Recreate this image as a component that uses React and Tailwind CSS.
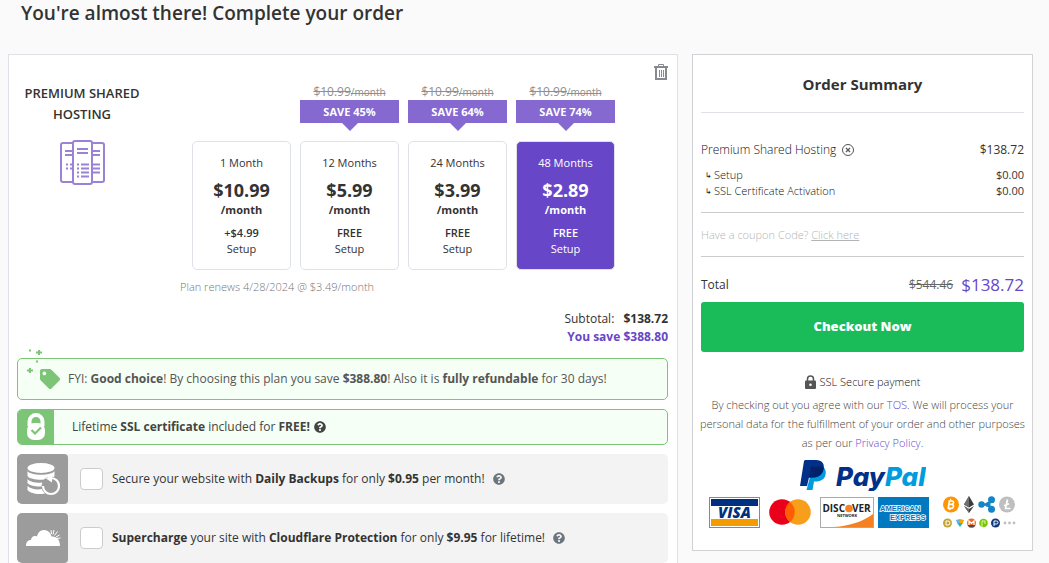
import React, { useState } from 'react';
import { FaTag, FaQuestionCircle } from 'react-icons/fa';

const PLANS = [
  { key: 1, label: '1 Month', price: '$10.99', setup: '+$4.99' },
  { key: 12, label: '12 Months', price: '$5.99', setup: 'FREE', save: 'SAVE 45%' },
  { key: 24, label: '24 Months', price: '$3.99', setup: 'FREE', save: 'SAVE 64%' },
  { key: 48, label: '48 Months', price: '$2.89', setup: 'FREE', save: 'SAVE 74%' },
];

const FEES = [
  { label: 'Setup', amount: '$0.00' },
  { label: 'SSL Certificate Activation', amount: '$0.00' },
];

const ServersIcon = () => (
  <svg width="45" height="45" viewBox="0 0 45 45" fill="none" stroke="#9a82d6" strokeWidth="2">
    <path d="M12.500 3H3a2 2 0 0 0-2 2v35a2 2 0 0 0 2 2h9.500M32.500 3H42a2 2 0 0 1 2 2v35a2 2 0 0 1-2 2h-9.500" />
    <rect x="13" y="1" width="19" height="43" rx="2" />
    <path d="M5 11h7M5 15h7M33 11h7M33 15h7M33 24.500h7M33 28.500h7M33 32.500h7" />
    <path d="M17 9h11M17 13h11M21 24.500h8M21 28.500h8M21 32.500h8M21 36.500h8" />
    <path d="M17 24.500h2M17 28.500h2M17 32.500h2M17 36.500h2M6 24.500h2M10 24.500h2M6 28.500h2M10 28.500h2" />
  </svg>
);

const TrashIcon = () => (
  <svg width="14" height="16" viewBox="0 0 14 16" fill="none" stroke="#868a90">
    <path d="M0 3h14" strokeWidth="2" />
    <path d="M4.500 2.500v-2h5v2" />
    <path d="M2 4v11h10V4" strokeWidth="2" />
    <path d="M5.500 6v7M7.500 6v7M9.500 6v7" />
  </svg>
);

const PadlockCheckIcon = () => (
  <svg width="20" height="28" viewBox="0 0 20 28">
    <path d="M3.500 13V8.500a6.500 6.500 0 0 1 13 0V13" fill="none" stroke="#fff" strokeWidth="4" />
    <rect x="1" y="10" width="18" height="17" rx="7" fill="#fff" />
    <path d="M5.500 17l3.500 3.500 6-6" fill="none" stroke="#7cc576" strokeWidth="2.200" />
  </svg>
);

const BackupIcon = () => (
  <svg width="34" height="34" viewBox="0 0 34 34">
    <g fill="#fff">
      <ellipse cx="15" cy="6" rx="13.500" ry="5" />
      <path d="M1.500 9c3 5 24 5 27 0v5c-3 5-24 5-27 0z" />
      <path d="M1.500 17c3 4 13 4.500 19 3l-4 4.500C9 25 3.500 23.500 1.500 21z" />
      <path d="M1.500 24c3 3 9.500 4 14.500 3l3 4.500C11 33 3.500 31 1.500 28z" />
    </g>
    <circle cx="25" cy="24" r="9.500" fill="#9c9c9c" />
    <path d="M25 16a8 8 0 1 1-8 8" fill="none" stroke="#fff" strokeWidth="2.200" />
    <path d="M20 16.500l6-4v8z" fill="#fff" />
  </svg>
);

const CloudIcon = () => (
  <svg width="36" height="20" viewBox="0 0 36 20">
    <path
      d="M1 18c0-4 2-6 5-6 0-3 3-5 6-3.500C13 4 16 2 19 2c4 0 7 3 7.500 6.500C32 8 35 12 35 18z"
      fill="#fff"
    />
    <path
      d="M26.500 6l-.5-4M28 6.500l1-4.500M29.500 7.500l3-4M31 9l3.500-2M31.500 10.500l4-.5"
      stroke="#fff"
      strokeWidth="1"
    />
  </svg>
);

const Sparkles = () => (
  <svg width="18" height="26" viewBox="0 0 18 26" stroke="#7cc576" strokeWidth="2">
    <path d="M3 1.500h2M10 3.500h6M13 1v5M10 12.500h2M1 21.500h6M4 19v5" />
  </svg>
);

const LockIcon = () => (
  <svg width="11" height="14" viewBox="0 0 11 14">
    <path d="M2.500 6V4a3 3 0 0 1 6 0v2" fill="none" stroke="#555" strokeWidth="1.500" />
    <rect y="5.500" width="11" height="8.500" rx="1" fill="#555" />
    <circle cx="5.500" cy="9.700" r="1.300" fill="#fff" />
  </svg>
);

const PayPalLogo = () => (
  <svg width="126" height="31" viewBox="0 0 126 31" role="img" aria-label="PayPal">
    <path d="M12 9.500L23 7c3 2 3.500 6 2 9.500-1.500 3.500-5 5-9.500 5H14l-1.500 8.500H6.500z" fill="#009cde" />
    <path d="M5 0h11c6 0 9 4 7.500 9-1.500 6-5 8.500-11 8.500H9L7 26H0L4 1z" fill="#003087" />
    <path d="M11 7.500c0-.7.500-1 1-1h7.500c2 0 3.300.2 4.200.7.100 6-4.200 10.300-11.200 10.300H9z" fill="#012169" />
    <text
      x="36"
      y="26"
      fontSize="26"
      fontFamily="Inter, sans-serif"
      fontWeight="800"
      fontStyle="italic"
      fill="#003087"
      className="[font-feature-settings:'cv11']"
    >
      Pay<tspan fill="#009cde">Pal</tspan>
    </text>
  </svg>
);

const VisaLogo = () => (
  <svg width="51" height="31" viewBox="0 0 51 31" role="img" aria-label="Visa">
    <rect x="0.500" y="0.500" width="50" height="30" fill="#fff" stroke="#7b86b5" />
    <path d="M2 2h47v7H2z" fill="#00307f" />
    <path d="M2 22h47v7H2z" fill="#f49b00" />
    <text
      x="25.500"
      y="21"
      textAnchor="middle"
      fontSize="15"
      fontFamily="Open Sans, sans-serif"
      fontWeight="800"
      fontStyle="italic"
      fill="#00307f"
      stroke="#fff"
      strokeWidth="1"
      paintOrder="stroke"
    >
      VISA
    </text>
  </svg>
);

const MastercardLogo = () => (
  <svg width="42" height="26" viewBox="0 0 42 26" role="img" aria-label="Mastercard">
    <circle cx="13" cy="13" r="12.800" fill="#eb001b" />
    <circle cx="29" cy="13" r="12.800" fill="#f79e1b" />
    <path d="M21 3a12.800 12.800 0 0 1 0 20 12.800 12.800 0 0 1 0-20z" fill="#ff5f00" />
  </svg>
);

const DiscoverLogo = () => (
  <svg width="54" height="31" viewBox="0 0 54 31" role="img" aria-label="Discover">
    <rect x="0.500" y="0.500" width="53" height="30" fill="#fff" stroke="#aaa" />
    <path d="M53 17v13H14c16-1 30-6 39-13z" fill="#f58220" />
    <g fontFamily="Open Sans, sans-serif" fontWeight="700" fill="#222">
      <text x="25" y="15" textAnchor="end" fontSize="10">DISC</text>
      <text x="32" y="15" fontSize="10">VER</text>
      <text x="27" y="20" textAnchor="middle" fontSize="4">NETWORK</text>
    </g>
    <circle cx="29" cy="11.500" r="3.800" fill="#f58220" />
  </svg>
);

const AmexLogo = () => (
  <svg width="51" height="31" viewBox="0 0 51 31" role="img" aria-label="American Express">
    <rect width="51" height="31" fill="#0079c1" />
    <g
      fontFamily="Liberation Sans, sans-serif"
      fontWeight="700"
      fontSize="7.500"
      fill="#0079c1"
      stroke="#fff"
      strokeWidth="1.500"
      paintOrder="stroke"
    >
      <text x="2" y="14">AMERICAN</text>
      <text x="12" y="23">EXPRESS</text>
    </g>
  </svg>
);

const CryptoLogos = () => (
  <svg width="74" height="32" viewBox="0 0 74 32" role="img" aria-label="Cryptocurrencies">
    <circle cx="9" cy="8.500" r="8" fill="#ff9500" />
    <circle cx="65" cy="8.500" r="8" fill="#bfbfbf" />
    <g fill="none" stroke="#fff" strokeWidth="1.700">
      <path d="M7.500 4.500l-1.300 8M6.500 5h3.500c2.300 0 2 3.300-.5 3.300H7.200h2.500c2.800 0 2.200 4-.7 4H5.500" />
      <path d="M8.700 2.800l-.3 1.700M8 12.500l-.3 1.700" strokeWidth="1.200" />
      <path d="M65.500 3.500l-2 9h5M62 9.800l5-2" />
    </g>
    <path d="M27 0l5 8.500-5 3-5-3zM22 10l5 3 5-3-5 7z" fill="#3c3c3d" />
    <path d="M27 0v11.500l-5-3zM27 13v4l-5-7z" fill="#6f6f70" />
    <path d="M39.500 8.500H46l3.500-4.500M46 8.500l3.500 4.500" stroke="#1585c5" strokeWidth="2.500" fill="none" />
    <g fill="#1585c5">
      <circle cx="39.500" cy="8.500" r="3.200" />
      <circle cx="46" cy="8.500" r="2.500" />
      <circle cx="49.500" cy="3.700" r="3.500" />
      <circle cx="49.500" cy="13.300" r="3.500" />
    </g>
    <circle cx="5.500" cy="27" r="4.500" fill="#c2a633" />
    <path d="M4 25h2a2 2 0 0 1 0 4H4z" fill="none" stroke="#fff" />
    <path d="M14 24l4-1v4h-3z" fill="#67b2e8" />
    <path d="M18 23l4 1-1 3h-3z" fill="#f7a800" />
    <path d="M15 27h6l-3 4z" fill="#24bba5" />
    <circle cx="29.500" cy="27" r="4.500" fill="#f26822" />
    <path d="M27 29v-4l2.500 2.500L32 25v4" fill="none" stroke="#fff" strokeWidth="1.200" />
    <path d="M25.500 29h8l-2 2.500h-4z" fill="#4c4c4c" />
    <circle cx="41.500" cy="27" r="4.300" fill="#78c800" />
    <path d="M40 31v-6h3v3" fill="none" stroke="#dff5bc" />
    <circle cx="53.500" cy="27" r="4.500" fill="#123a7a" />
    <path d="M52 30v-5h2.500a1.500 1.500 0 0 1 0 3H52" fill="none" stroke="#fff" />
    <g fill="#bfbfbf">
      <circle cx="63" cy="27" r="1.400" />
      <circle cx="67.500" cy="27" r="1.400" />
      <circle cx="72" cy="27" r="1.400" />
    </g>
  </svg>
);

const PlanOption = ({ plan, active, onSelect }) => (
  <div className="flex flex-1 flex-col text-center">
    {plan.save && (
      <>
        <div className="h-[17px] text-xs leading-[17px] text-[#8f8f8f] line-through">
          $10.99<span className="text-[10px]">/month</span>
        </div>
        <div className="bg-[#8568d0] text-[11px] leading-[23px] font-bold text-white">{plan.save}</div>
        <div className="mx-auto mb-2.5 h-0 w-0 border-x-8 border-t-8 border-x-transparent border-t-[#8568d0]"></div>
      </>
    )}
    <button
      type="button"
      aria-pressed={active}
      onClick={onSelect}
      className={`flex flex-col items-center rounded-[5px] border border-[#dee2e6] pt-3 pb-3 text-[11px] leading-4 ${
        active ? 'bg-[#6747c7] text-white' : 'bg-white text-[#333]'
      }`}
    >
      <span className="leading-[18px]">{plan.label}</span>
      <span className="mt-1.5 text-lg leading-6 font-bold">{plan.price}</span>
      <span className="font-bold">/month</span>
      <span className="mt-[7px] font-semibold">{plan.setup}</span>
      <span>Setup</span>
    </button>
  </div>
);

const AddOn = ({ id, icon, children }) => (
  <div className="mt-[9px] flex h-[50px] items-center overflow-hidden rounded-[5px] bg-[#f3f3f3] text-xs text-[#333]">
    <div className="flex h-full w-[51px] items-center justify-center rounded bg-[#9c9c9c]">{icon}</div>
    <input
      id={id}
      type="checkbox"
      className="ml-3 h-[22px] w-[23px] appearance-none rounded border border-[#ccc] bg-white checked:bg-[#6747c7]"
    />
    <label htmlFor={id} className="ml-[9px]">{children}</label>
    <FaQuestionCircle size={12} className="ml-2 text-[#6c757d]" />
  </div>
);

const OrderSummary = () => (
  <aside className="w-[341px] shrink-0 self-start border border-[#d0d2d5] bg-white px-2 pb-[22px] text-xs text-[#333]">
    <h2 className="border-b border-[#dee2e6] pt-[17px] pb-4 text-center text-[15px] leading-6 font-bold">
      Order Summary
    </h2>
    <div className="mt-7 flex items-center justify-between leading-[18px]">
      <span className="flex items-center gap-1.5 font-light text-[#111]">
        Premium Shared Hosting
        <button type="button" aria-label="Remove Premium Shared Hosting">
          <svg width="12" height="12" viewBox="0 0 12 12" fill="none" stroke="#555">
            <circle cx="6" cy="6" r="5.500" />
            <path d="M4 4l4 4M8 4l-4 4" strokeWidth="1.200" />
          </svg>
        </button>
      </span>
      <span>$138.72</span>
    </div>
    <div className="mt-2 border-b border-[#ccc] pb-[13px] text-[11px] leading-4">
      {FEES.map((fee) => (
        <div key={fee.label} className="flex h-4 justify-between">
          <span className="flex gap-0.5 pl-1 font-light text-[#111]">
            <span className="text-[8px]">↳</span>
            {fee.label}
          </span>
          <span>{fee.amount}</span>
        </div>
      ))}
    </div>
    <div className="border-b border-[#ccc] pt-3.5 pb-[13px] text-[11px] leading-4 font-light text-[#b4b4b4]">
      Have a coupon Code? <a href="#coupon" className="underline">Click here</a>
    </div>
    <div className="flex items-center justify-between pt-[15px] pb-1">
      <span>Total</span>
      <span className="flex items-center gap-2">
        <span className="text-[#666] line-through">$544.46</span>
        <span className="text-[17px] leading-[26px] font-medium text-[#6747c7]">$138.72</span>
      </span>
    </div>
    <button type="button" className="h-[50px] w-full rounded-[3px] bg-[#1abc59] text-[13px] font-extrabold text-white">
      Checkout Now
    </button>
    <div className="mt-[21px] flex items-center justify-center gap-1 text-[11px] leading-[18px] font-light text-[#111]">
      <LockIcon />
      SSL Secure payment
    </div>
    <p className="-mx-1 mt-1 text-center text-[11px] leading-[19px] font-light text-[#444]">
      By checking out you agree with our <a href="#tos" className="text-[#6747c7]">TOS</a>. We will process your
      personal data for the fulfillment of your order and other purposes as per our{' '}
      <a href="#privacy" className="text-[#6747c7]">Privacy Policy</a>.
    </p>
    <div className="mt-2 flex justify-center">
      <PayPalLogo />
    </div>
    <div className="mt-[5px] flex items-center gap-[9px] px-2">
      <VisaLogo />
      <MastercardLogo />
      <div className="flex gap-1">
        <DiscoverLogo />
        <AmexLogo />
      </div>
      <div className="ml-auto">
        <CryptoLogos />
      </div>
    </div>
  </aside>
);

const App = () => {
  const [selected, setSelected] = useState(48);

  return (
    <div className="min-h-screen bg-[#fafafa] font-['Open_Sans','Noto_Sans',sans-serif] text-[#333]">
      <h1 className="px-[21px] pb-7 text-[19px] leading-[26px] font-semibold">You're almost there! Complete your order</h1>
      <main className="flex gap-3.5 pr-4 pl-2">
        <section className="relative min-w-0 flex-1 border border-b-0 border-[#dee2e6] bg-white pt-7 pr-[9px] pl-2">
          <button type="button" aria-label="Remove item" className="absolute top-[9px] right-[9px]">
            <TrashIcon />
          </button>

          <div className="flex">
            <div className="flex w-[130px] shrink-0 flex-col items-center">
              <h2 className="text-center text-[13px] leading-[21px] font-semibold">PREMIUM SHARED HOSTING</h2>
              <div className="mt-[15px]">
                <ServersIcon />
              </div>
            </div>
            <div className="ml-[33px] flex-1">
              <div className="flex items-end gap-[9px] pr-[53px] pl-3">
                {PLANS.map((plan) => (
                  <PlanOption
                    key={plan.key}
                    plan={plan}
                    active={plan.key === selected}
                    onSelect={() => setSelected(plan.key)}
                  />
                ))}
              </div>
              <p className="mt-[9px] text-[11px] leading-4 font-light text-[#777]">Plan renews 4/28/2024 @ $3.49/month</p>
            </div>
          </div>

          <div className="mt-[15px] mb-3 text-right text-xs leading-[18px]">
            <div>Subtotal: <strong className="ml-1.5">$138.72</strong></div>
            <div className="font-bold text-[#6747c7]">You save $388.80</div>
          </div>

          <div className="relative flex h-[42px] items-center rounded-[5px] border border-[#7cc576] bg-[#f5fff5] pl-[22px] text-xs text-[#555]">
            <div className="absolute -top-2.5 left-2">
              <Sparkles />
            </div>
            <FaTag size={20} className="mr-2 text-[#7cc576]" />
            <p>
              FYI: <strong>Good choice</strong>! By choosing this plan you save <strong>$388.80</strong>! Also it is{' '}
              <strong>fully refundable</strong> for 30 days!
            </p>
          </div>

          <div className="mt-[9px] flex h-9 items-center overflow-hidden rounded-[5px] border border-[#7cc576] bg-[#f5fff5] text-xs text-[#444]">
            <div className="flex h-full w-9 items-center justify-center bg-[#7cc576]">
              <PadlockCheckIcon />
            </div>
            <p className="ml-[18px]">
              Lifetime <strong>SSL certificate</strong> included for <strong>FREE!</strong>
            </p>
            <FaQuestionCircle size={12} className="ml-1" />
          </div>

          <AddOn id="backups" icon={<BackupIcon />}>
            Secure your website with <strong>Daily Backups</strong> for only <strong>$0.95</strong> per month!
          </AddOn>
          <AddOn id="cloudflare" icon={<CloudIcon />}>
            <strong>Supercharge</strong> your site with <strong>Cloudflare Protection</strong> for only{' '}
            <strong>$9.95</strong> for lifetime!
          </AddOn>
        </section>

        <OrderSummary />
      </main>
    </div>
  );
};

export default App;
